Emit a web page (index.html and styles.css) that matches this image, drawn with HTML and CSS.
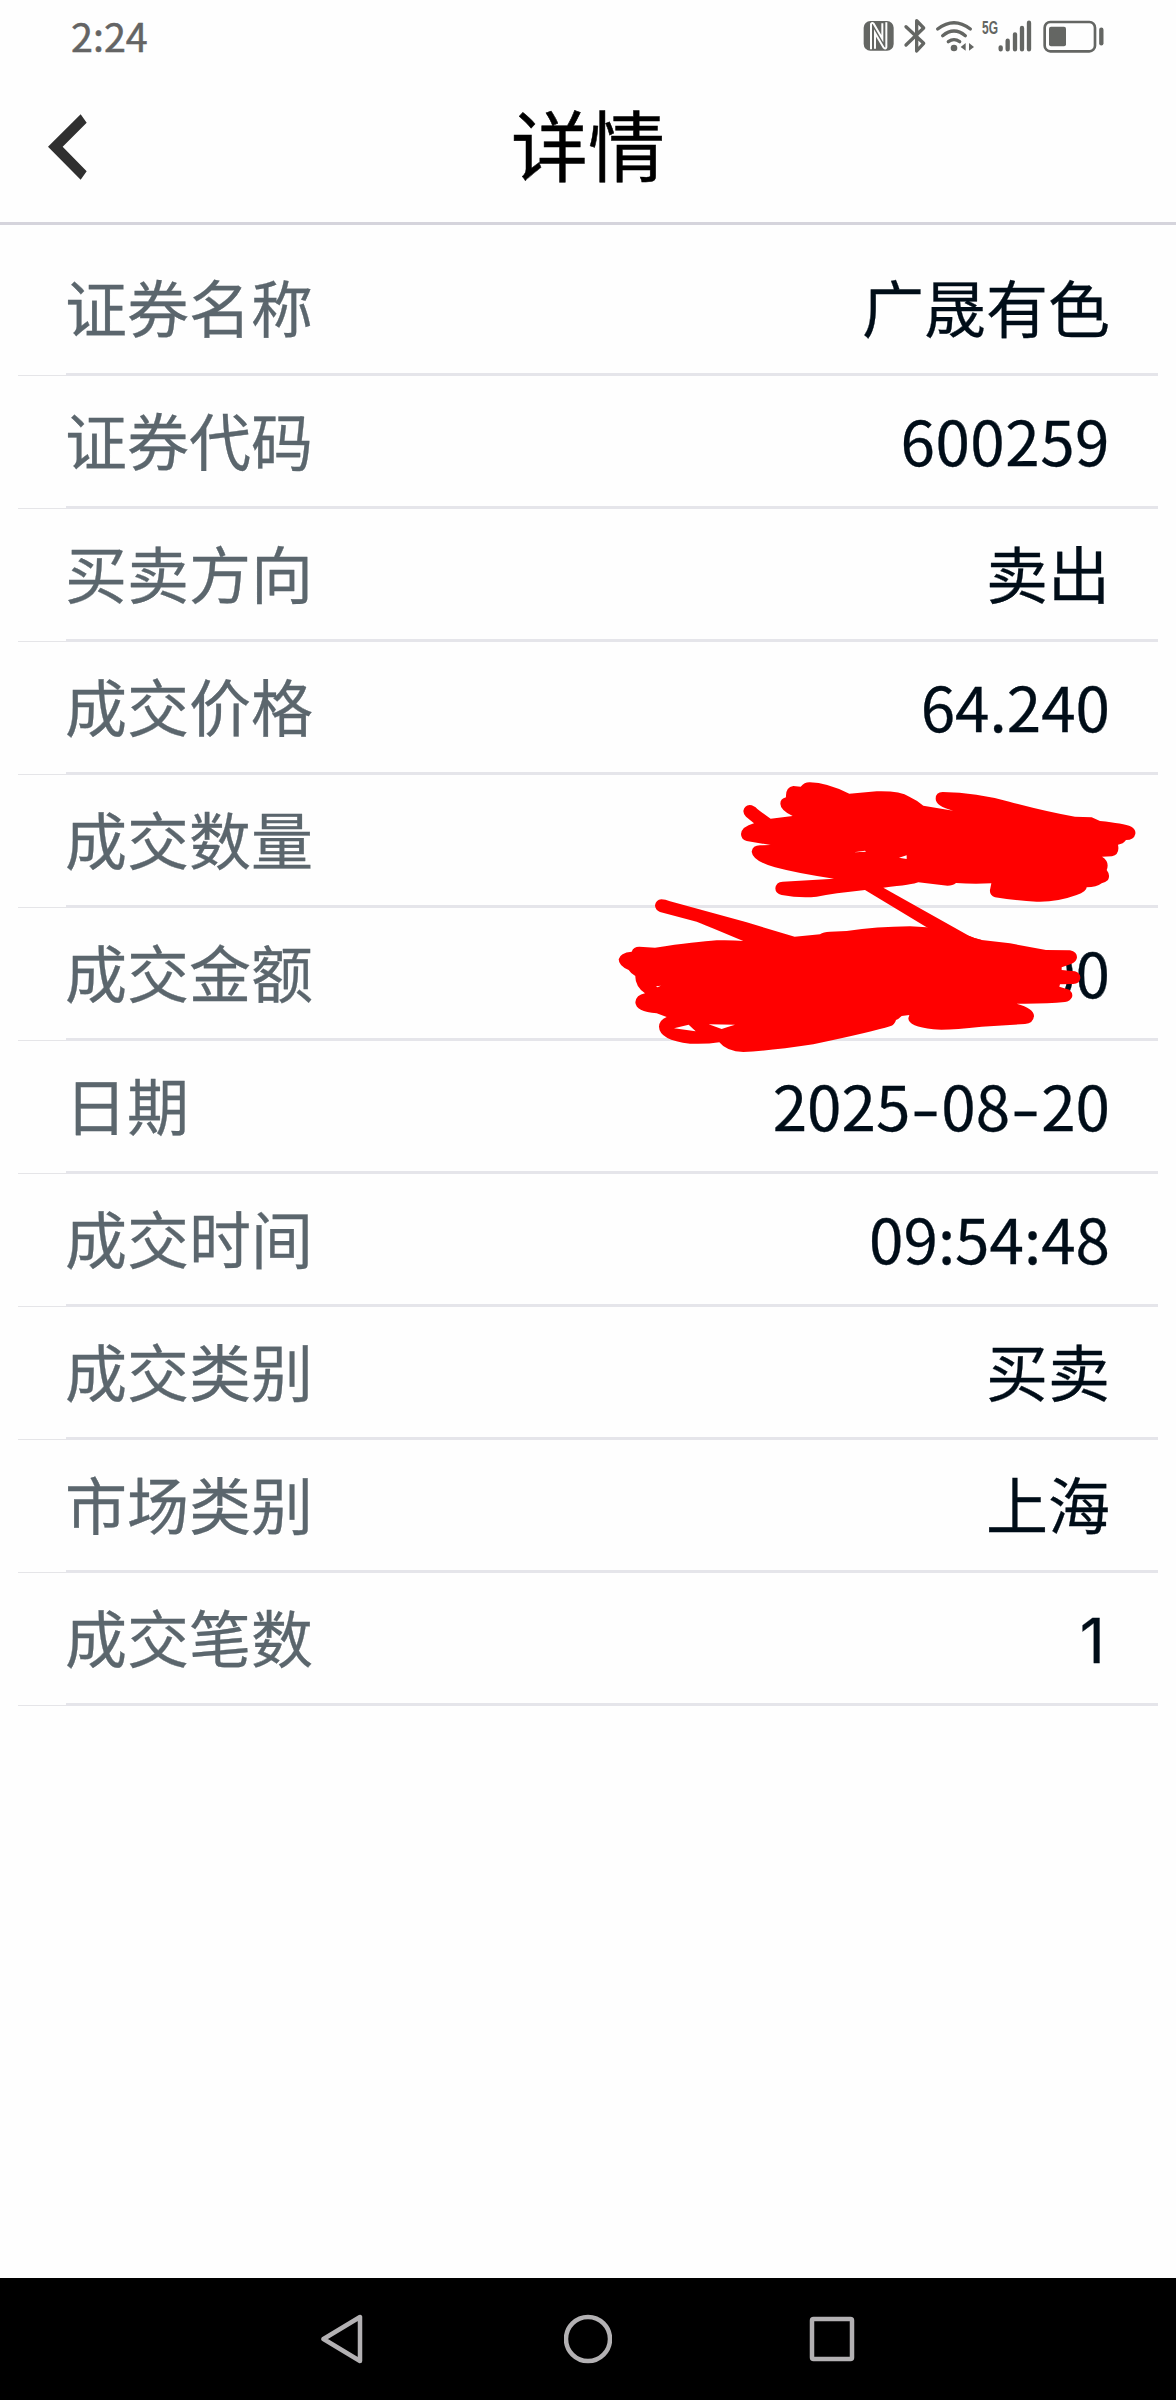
FILE: index.html
```html
<!DOCTYPE html>
<html lang="zh-CN">
<head>
<meta charset="utf-8">
<title>详情</title>
<link rel="stylesheet" href="styles.css">
</head>
<body>
<div class="screen">
  <div class="status">
    <span class="time">2:24</span>
    <svg class="status-icons" width="300" height="80" viewBox="0 0 900 240">
      <rect x="71" y="63" width="90" height="89" rx="20"/>
      <path class="cut-line" d="M93 148V72Q96 66 101 71L127 116V70M105 146V99L131 143Q137 149 139 142V67"/>
      <path class="line" d="M198 80L251 130L230 153V62L251 84L198 135"/>
      <path class="line" d="M293 87Q342 49 391 87M308 107Q342 79 376 107M325 125Q342 113 359 125"/>
      <circle cx="342" cy="144" r="10"/>
      <path d="M377 129V152L362 141ZM387 129V152L402 141Z"/>
      <text class="net" x="426" y="102" textLength="48" lengthAdjust="spacingAndGlyphs">5G</text>
      <path class="bars" d="M482 142V148M503 122V148M525 103V148M546 84V148M567 68V148"/>
      <rect class="outline" x="614" y="66" width="151" height="88" rx="17"/>
      <rect x="627" y="80" width="51" height="59" rx="6"/>
      <path class="bars" d="M784 89V130"/>
    </svg>
  </div>
  <header class="header">
    <svg class="back" width="40" height="66" viewBox="0 0 120 198"><path d="M98 1L116 26L44 98L116 172L98 197L0 98Z"/></svg>
    <h1 class="title">详情</h1>
  </header>
  <main class="list">
    <div class="row"><span class="label">证券名称</span><span class="value">广晟有色</span></div>
    <div class="row"><span class="label">证券代码</span><span class="value code">600259</span></div>
    <div class="row"><span class="label">买卖方向</span><span class="value">卖出</span></div>
    <div class="row"><span class="label">成交价格</span><span class="value">64.240</span></div>
    <div class="row"><span class="label">成交数量</span><span class="value"></span></div>
    <div class="row"><span class="label">成交金额</span><span class="value">00</span></div>
    <div class="row"><span class="label">日期</span><span class="value">2025<span class="dash">-</span>08<span class="dash">-</span>20</span></div>
    <div class="row"><span class="label">成交时间</span><span class="value">09:54:48</span></div>
    <div class="row"><span class="label">成交类别</span><span class="value">买卖</span></div>
    <div class="row"><span class="label">市场类别</span><span class="value">上海</span></div>
    <div class="row"><span class="label">成交笔数</span><span class="value count">1</span></div>
  </main>
  <svg class="scribble" width="576" height="320" viewBox="0 0 1728 960">
    <path d="M449 135Q462 136 472 147Q495 165 512 176L578 168Q541 150 541 131Q541 116 558 112Q556 82 580 78L602 80Q614 66 630 67Q680 68 748 101L830 94Q900 92 928 110Q950 120 970 137L1060 152Q1007 138 1007 116Q1007 96 1028 96Q1130 98 1228 125Q1340 155 1425 170L1475 172L1500 183Q1570 190 1594 200Q1608 208 1606 222Q1602 240 1578 240Q1570 252 1554 254Q1560 284 1536 289L1506 290Q1530 305 1520 330Q1532 345 1524 360Q1515 368 1505 370Q1490 382 1460 382Q1460 395 1430 405Q1370 427 1310 425Q1250 422 1185 412Q1168 405 1170 390L1174 370Q1120 373 1068 369Q1055 380 1030 376L955 367Q940 374 850 383L1108 528Q1125 536 1145 540L1100 580L980 502L795 390Q700 400 650 410Q600 415 545 405Q526 400 526 385Q528 366 548 365L702 356Q600 342 525 322Q458 303 455 275Q458 256 480 256L512 255L440 243Q423 238 423 222Q425 200 462 190L438 170Q430 162 430 153Q433 136 449 135Z"/>
    <path d="M184 418Q196 418 210 424L440 487L584 530L660 523Q670 515 690 515L740 513Q830 500 930 499L980 502L1108 528Q1125 536 1145 540L1230 550L1338 570L1410 571Q1431 576 1431 592Q1430 605 1415 611L1385 622V630L1425 634Q1442 640 1441 655Q1438 672 1420 672L1380 673L1378 680L1408 689Q1420 700 1416 712Q1410 724 1395 726Q1340 732 1250 731Q1302 745 1302 768Q1300 790 1275 792L1145 800Q1040 812 1000 808Q925 800 925 775L928 765L905 768Q895 778 888 780Q884 795 870 799Q820 815 640 853Q500 874 430 876Q380 875 358 847Q320 853 270 851Q178 840 177 800Q178 780 200 771L170 760Q107 755 106 727Q108 705 135 700Q105 678 106 648Q92 640 86 630Q56 618 56 598Q60 578 95 575Q100 560 118 560L165 563Q290 545 350 541Q400 540 430 543Q340 505 290 485L180 456Q165 450 165 436Q168 419 184 418Z"/>
    <path class="gap" d="M222 805L266 794L287 814ZM326 793L405 794Q385 800 365 807ZM897 293L920 286V297ZM762 277L795 272L798 275ZM168 679L183 677L172 682Z"/>
  </svg>
  <nav class="nav">
    <svg width="48" height="50" viewBox="0 0 48 50"><path d="M3.500 25L40 3V47Z"/></svg>
    <svg width="48" height="50" viewBox="0 0 48 50"><circle cx="24" cy="25" r="22"/></svg>
    <svg width="48" height="50" viewBox="0 0 48 50"><rect x="4" y="5" width="40" height="40" rx="1.500"/></svg>
  </nav>
</div>
</body>
</html>
```
FILE: styles.css
```css
body {
  margin: 0;
  background: #fefefe;
  font-family: "Noto Sans CJK SC", sans-serif;
}

.screen {
  position: relative;
  display: flex;
  flex-direction: column;
  width: 1176px;
  height: 2400px;
}

.status {
  display: flex;
  justify-content: space-between;
  height: 72px;
  padding: 0 36px 0 71px;
  color: #646464;
}

.time {
  font-size: 39.5px;
  line-height: 70px;
  -webkit-text-stroke: 0.5px;
}

.status-icons {
  fill: #646663;
}

.status-icons .line,
.status-icons .bars,
.status-icons .outline {
  fill: none;
  stroke: #646663;
  stroke-width: 10;
  stroke-linecap: round;
  stroke-linejoin: round;
}

.status-icons .outline {
  stroke-width: 8;
}

.status-icons .bars {
  stroke-width: 13;
}

.status-icons .cut-line {
  fill: none;
  stroke: #fefefe;
  stroke-width: 6;
}

.net {
  font: bold 54px "Liberation Sans", sans-serif;
}

.header {
  display: grid;
  grid-template-columns: 150px 1fr 150px;
  align-items: center;
  height: 150px;
  border-bottom: 3px solid #d5d4dc;
}

.back {
  margin-left: 48px;
  fill: #303030;
}

.title {
  margin: 0;
  padding-bottom: 8px;
  font-size: 77px;
  font-weight: 400;
  line-height: 142px;
  text-align: center;
  color: #000;
  -webkit-text-stroke: 0.5px;
}

.list {
  flex: 1;
  padding-top: 18px;
}

.row {
  display: flex;
  justify-content: space-between;
  height: 127px;
  margin-left: 18px;
  margin-right: 18px;
  padding: 0 48px 6px 47px;
  font-size: 62px;
  line-height: 127px;
  -webkit-text-stroke: 0.3px;
  background:
    linear-gradient(#e5e5ea, #e5e5ea) 48px 100% / 100% 3px no-repeat,
    linear-gradient(#e5e5e8, #e5e5e8) 0 100% / 48px 1px no-repeat;
}

.label {
  color: #5b666d;
}

.value {
  color: #000d18;
}

.code {
  letter-spacing: 0.5px;
}

.count {
  padding-right: 5px;
  font-family: Inter, sans-serif;
  line-height: 135px;
}

.dash {
  display: inline-block;
  width: 31px;
  text-align: center;
  transform: scaleX(1.35);
}

.scribble {
  position: absolute;
  left: 600px;
  top: 760px;
  fill: #f00;
}

.scribble .gap {
  fill: #fefefe;
}

.nav {
  display: flex;
  justify-content: center;
  align-items: center;
  gap: 196px;
  height: 122px;
  background: #000;
}

.nav svg {
  fill: none;
  stroke: #b3b1b3;
  stroke-width: 4.500;
  stroke-linejoin: round;
}
```
